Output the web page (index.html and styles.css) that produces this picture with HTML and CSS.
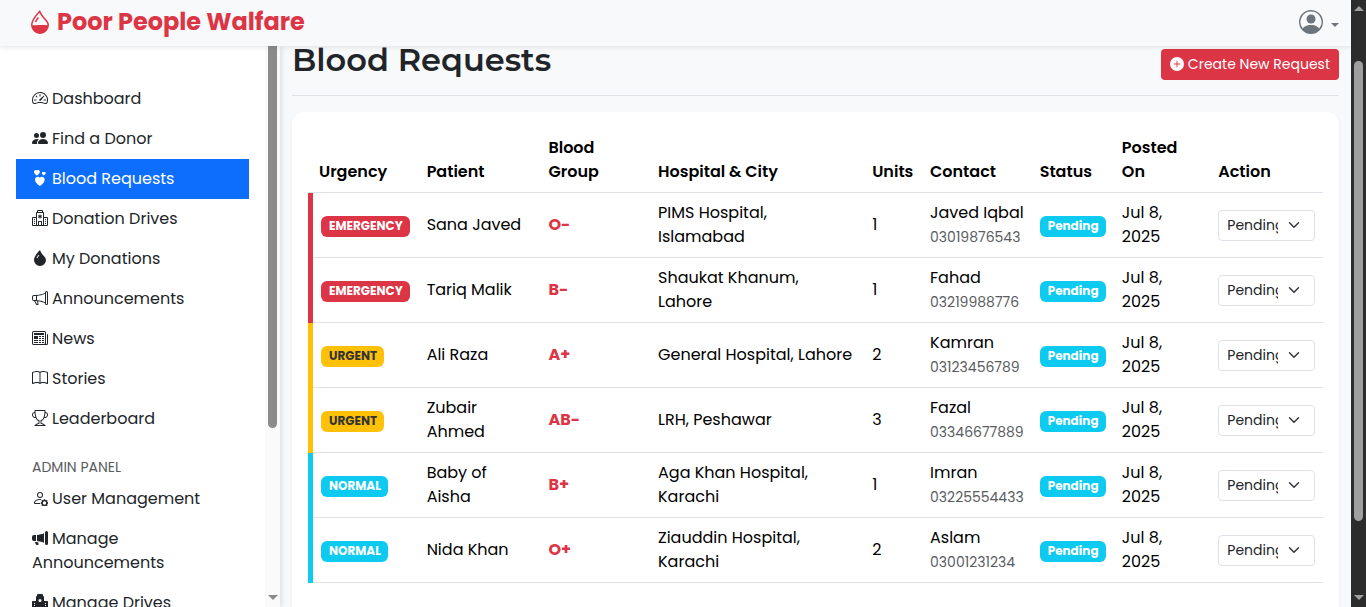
FILE: index.html
```html
<!DOCTYPE html>
<html lang="en">
<head>
<meta charset="utf-8">
<meta name="viewport" content="width=device-width, initial-scale=1">
<title>Blood Requests - Poor People Walfare</title>
<link rel="stylesheet" href="styles.css">
</head>
<body>
<svg class="sprite" aria-hidden="true">
  <symbol id="droplet-half" viewBox="0 0 16 16"><path fill-rule="evenodd" d="M7.210.800C7.690.295 8 0 8 0q.164.544.371 1.038c.812 1.946 2.073 3.350 3.197 4.600C12.878 7.096 14 8.345 14 10a6 6 0 0 1-12 0C2 6.668 5.580 2.517 7.210.800m.413 1.021A31 31 0 0 0 5.794 3.990c-.726.950-1.436 2.008-1.960 3.070C3.304 8.133 3 9.138 3 10c0 .300 2.500.200 5 0s5 .300 5 0c0-1.201-.796-2.157-2.181-3.700C9.750 5.110 8.500 3.720 7.623 1.820z"/><path fill-rule="evenodd" d="M4.553 7.776c.820-1.641 1.717-2.753 2.093-3.130l.708.708c-.290.290-1.128 1.311-1.907 2.870z"/></symbol>
  <symbol id="person-circle" viewBox="0 0 16 16"><path d="M11 6a3 3 0 1 1-6 0 3 3 0 0 1 6 0"/><path fill-rule="evenodd" d="M0 8a8 8 0 1 1 16 0A8 8 0 0 1 0 8m8-7a7 7 0 0 0-5.468 11.370C3.242 11.226 4.805 10 8 10s4.757 1.225 5.468 2.370A7 7 0 0 0 8 1"/></symbol>
  <symbol id="speedometer" viewBox="0 0 16 16"><path d="M8 4a.5.5 0 0 1 .5.5V6a.5.5 0 0 1-1 0V4.500A.5.5 0 0 1 8 4M3.732 5.732a.5.5 0 0 1 .707 0l.915.914a.5.5 0 1 1-.708.708l-.914-.915a.5.5 0 0 1 0-.707M2 10a.5.5 0 0 1 .5-.5h1.586a.5.5 0 0 1 0 1H2.500A.5.5 0 0 1 2 10m9.500 0a.5.5 0 0 1 .5-.5h1.500a.5.5 0 0 1 0 1H12a.5.5 0 0 1-.5-.5m.754-4.246a.389.389 0 0 0-.527-.020L7.547 9.310a.910.910 0 1 0 1.302 1.258l3.434-4.297a.389.389 0 0 0-.029-.518z"/><path fill-rule="evenodd" d="M0 10a8 8 0 1 1 15.547 2.661c-.442 1.253-1.845 1.602-2.932 1.250C11.309 13.488 9.475 13 8 13c-1.474 0-3.310.488-4.615.911-1.087.352-2.490.003-2.932-1.250A8 8 0 0 1 0 10m8-7a7 7 0 0 0-6.603 9.329c.203.575.923.876 1.680.630C4.397 12.533 6.358 12 8 12s3.604.532 4.923.960c.757.245 1.477-.056 1.680-.631A7 7 0 0 0 8 3"/></symbol>
  <symbol id="people-fill" viewBox="0 0 16 16"><path d="M7 14s-1 0-1-1 1-4 5-4 5 3 5 4-1 1-1 1zm4-6a3 3 0 1 0 0-6 3 3 0 0 0 0 6m-5.784 6A2.240 2.240 0 0 1 5 13c0-1.355.680-2.750 1.936-3.720A6.300 6.300 0 0 0 5 9c-4 0-5 3-5 4s1 1 1 1zM4.500 8a2.500 2.500 0 1 0 0-5 2.500 2.500 0 0 0 0 5"/></symbol>
  <symbol id="hearts" viewBox="0 0 16 16"><path fill-rule="evenodd" d="M4.931.481c1.627-1.671 5.692 1.254 0 5.015-5.692-3.760-1.626-6.686 0-5.015m6.840 1.794c1.084-1.114 3.795.836 0 3.343-3.795-2.507-1.084-4.457 0-3.343M7.840 7.642c2.710-2.786 9.486 2.090 0 8.358-9.487-6.268-2.710-11.144 0-8.358"/></symbol>
  <symbol id="hospital" viewBox="0 0 16 16"><path fill-rule="evenodd" d="M5 1a1 1 0 0 1 1-1h4a1 1 0 0 1 1 1v1a1 1 0 0 1 1 1v4h3a1 1 0 0 1 1 1v7a1 1 0 0 1-1 1H1a1 1 0 0 1-1-1V8a1 1 0 0 1 1-1h3V3a1 1 0 0 1 1-1zm1 1h4V1H6zM5 3v12h1v-3.500a.5.5 0 0 1 .5-.5h3a.5.5 0 0 1 .5.5V15h1V3zm2 9v3h2v-3zM1 8v7h3V8zm11 0v7h3V8z"/><path d="M7.500 4.500h1v1.134l.982-.567.500.866L9 6.500l.982.567-.500.866-.982-.567V8.500h-1V7.366l-.982.567-.500-.866L7 6.500l-.982-.567.500-.866.982.567zM2 9h1v1H2zm0 2h1v1H2zm0 2h1v1H2zm11-4h1v1h-1zm0 2h1v1h-1zm0 2h1v1h-1z"/></symbol>
  <symbol id="hospital-fill" viewBox="0 0 16 16"><path fill-rule="evenodd" d="M6 0a1 1 0 0 0-1 1v1a1 1 0 0 0-1 1v4H1a1 1 0 0 0-1 1v7a1 1 0 0 0 1 1h6v-2.500a.5.5 0 0 1 1 0V16h7a1 1 0 0 0 1-1V8a1 1 0 0 0-1-1h-3V3a1 1 0 0 0-1-1V1a1 1 0 0 0-1-1zm2 5a1.500 1.500 0 1 0 0 3 1.500 1.500 0 0 0 0-3M2 9h1v1H2zm0 2h1v1H2zm11-2h1v1h-1zm0 2h1v1h-1z"/></symbol>
  <symbol id="droplet-fill" viewBox="0 0 16 16"><path fill-rule="evenodd" d="M8 16a6 6 0 0 0 6-6c0-1.655-1.122-2.904-2.432-4.362C10.254 4.176 8.750 2.503 8 0c0 0-6 5.686-6 10a6 6 0 0 0 6 6M6.646 4.646l.708.708c-.290.290-1.128 1.311-1.907 2.870l-.894-.448c.820-1.641 1.717-2.753 2.093-3.130"/></symbol>
  <symbol id="megaphone" viewBox="0 0 16 16"><path d="M13 2.500a1.500 1.500 0 0 1 3 0v11a1.500 1.500 0 0 1-3 0v-.214c-2.162-1.241-4.490-1.843-6.912-2.083l.405 2.712A1 1 0 0 1 5.510 15.100h-.548a1 1 0 0 1-.916-.599l-1.850-3.490-.202-.003A2.014 2.014 0 0 1 0 9V7a2.020 2.020 0 0 1 1.992-2.013 75 75 0 0 0 2.483-.075c3.043-.154 6.148-.849 8.525-2.199zm1 0v11a.5.5 0 0 0 1 0v-11a.5.5 0 0 0-1 0m-1 1.350c-2.344 1.205-5.209 1.842-8 2.033v4.233q.270.015.537.036c2.568.189 5.093.744 7.463 1.993zm-9 6.215v-4.130a95 95 0 0 1-1.992.052A1.020 1.020 0 0 0 1 7v2c0 .550.448 1.002 1.006 1.009A61 61 0 0 1 4 10.065m-.657.975 1.609 3.037.010.024h.548l-.002-.014-.443-2.966a68 68 0 0 0-1.722-.082z"/></symbol>
  <symbol id="megaphone-fill" viewBox="0 0 16 16"><path d="M13 2.500a1.500 1.500 0 0 1 3 0v11a1.500 1.500 0 0 1-3 0zm-1 .724c-2.067.950-4.539 1.481-7 1.656v6.237a25 25 0 0 1 1.088.085c2.053.204 4.038.668 5.912 1.560zm-8 7.841V4.934c-.680.027-1.399.043-2.008.053A2.020 2.020 0 0 0 0 7v2c0 1.106.896 1.996 1.994 2.009l.496.008a64 64 0 0 1 1.510.048m1.390 1.081q.428.032.850.078l.253 1.690a1 1 0 0 1-.983 1.187h-.548a1 1 0 0 1-.916-.599l-1.314-2.480a66 66 0 0 1 1.692.064q.491.026.966.060"/></symbol>
  <symbol id="newspaper" viewBox="0 0 16 16"><path d="M0 2.500A1.500 1.500 0 0 1 1.500 1h11A1.500 1.500 0 0 1 14 2.500v10.528c0 .300-.050.654-.238.972h.738a.5.5 0 0 0 .5-.5v-9a.5.5 0 0 1 1 0v9a1.500 1.500 0 0 1-1.500 1.500H1.497A1.497 1.497 0 0 1 0 13.500zM12 14c.370 0 .654-.211.853-.441.092-.106.147-.279.147-.531V2.500a.5.5 0 0 0-.5-.5h-11a.5.5 0 0 0-.5.5v11c0 .278.223.500.497.500z"/><path d="M2 3h10v2H2zm0 3h4v3H2zm0 4h4v1H2zm0 2h4v1H2zm5-6h2v1H7zm3 0h2v1h-2zM7 8h2v1H7zm3 0h2v1h-2zm-3 2h2v1H7zm3 0h2v1h-2zm-3 2h2v1H7zm3 0h2v1h-2z"/></symbol>
  <symbol id="book" viewBox="0 0 16 16"><path d="M1 2.828c.885-.370 2.154-.769 3.388-.893 1.330-.134 2.458.063 3.112.752v9.746c-.935-.530-2.120-.603-3.213-.493-1.180.120-2.370.461-3.287.811zm7.500-.141c.654-.689 1.782-.886 3.112-.752 1.234.124 2.503.523 3.388.893v9.923c-.918-.350-2.107-.692-3.287-.810-1.094-.111-2.278-.039-3.213.492zM8 1.783C7.015.936 5.587.810 4.287.940c-1.514.153-3.042.672-3.994 1.105A.5.5 0 0 0 0 2.500v11a.5.5 0 0 0 .707.455c.882-.400 2.303-.881 3.680-1.020 1.409-.142 2.590.087 3.223.877a.5.5 0 0 0 .780 0c.633-.790 1.814-1.019 3.222-.877 1.378.139 2.800.620 3.681 1.020A.5.5 0 0 0 16 13.500v-11a.5.5 0 0 0-.293-.455c-.952-.433-2.480-.952-3.994-1.105C10.413.809 8.985.936 8 1.783"/></symbol>
  <symbol id="trophy" viewBox="0 0 16 16"><path d="M2.500.5A.5.5 0 0 1 3 0h10a.5.5 0 0 1 .5.5q0 .807-.034 1.536a3 3 0 1 1-1.133 5.890c-.790 1.865-1.878 2.777-2.833 3.011v2.173l1.425.356c.194.048.377.135.537.255L13.300 15.100a.5.5 0 0 1-.3.900H3a.5.5 0 0 1-.3-.900l1.838-1.379c.160-.120.343-.207.537-.255L6.500 13.110v-2.173c-.955-.234-2.043-1.146-2.833-3.012a3 3 0 1 1-1.132-5.890A33 33 0 0 1 2.500.5m.099 2.540a2 2 0 0 0 .720 3.935c-.333-1.050-.588-2.346-.720-3.935m10.083 3.935a2 2 0 0 0 .720-3.935c-.133 1.590-.388 2.885-.720 3.935M3.504 1q.010.775.056 1.469c.130 2.028.457 3.546.870 4.667C5.294 9.480 6.484 10 7 10a.5.5 0 0 1 .5.5v2.610a1 1 0 0 1-.757.970l-1.426.356a.5.5 0 0 0-.179.085L4.500 15h7l-.638-.479a.5.5 0 0 0-.180-.085l-1.425-.356a1 1 0 0 1-.757-.970V10.500A.5.5 0 0 1 9 10c.516 0 1.706-.520 2.570-2.864.413-1.120.740-2.640.870-4.667q.045-.694.056-1.469z"/></symbol>
  <symbol id="person-gear" viewBox="0 0 16 16"><path fill-rule="evenodd" d="M11 5a3 3 0 1 1-6 0 3 3 0 0 1 6 0M8 7a2 2 0 1 0 0-4 2 2 0 0 0 0 4m.256 7a4.500 4.500 0 0 1-.229-1.004H3c.001-.246.154-.986.832-1.664C4.484 10.680 5.711 10 8 10q.390 0 .740.025c.226-.341.496-.650.804-.918Q8.844 9.002 8 9c-5 0-6 3-6 4s1 1 1 1z"/><path d="M11.900 9.200h1.200l.300.900.500.200.850-.400.850.850-.400.850.200.500.900.300v1.200l-.900.300-.200.500.400.850-.850.850-.850-.400-.500.200-.300.900h-1.200l-.300-.900-.500-.200-.850.400-.850-.850.400-.850-.200-.500-.900-.300v-1.200l.900-.300.200-.500-.400-.850.850-.850.850.400.500-.200zM12.500 11.300a1.700 1.700 0 1 0 0 3.400 1.700 1.700 0 0 0 0-3.400" fill-rule="evenodd"/></symbol>
  <symbol id="plus-circle-fill" viewBox="0 0 16 16"><path fill-rule="evenodd" d="M16 8A8 8 0 1 1 0 8a8 8 0 0 1 16 0M8.500 4.500a.5.5 0 0 0-1 0v3h-3a.5.5 0 0 0 0 1h3v3a.5.5 0 0 0 1 0v-3h3a.5.5 0 0 0 0-1h-3z"/></symbol>
</svg>

<div class="window">
  <div class="page">
    <header class="topbar">
      <a class="brand" href="#"><svg class="brand-icon"><use href="#droplet-half"/></svg>Poor People Walfare</a>
      <button class="account" type="button" aria-label="Account menu"><svg class="avatar"><use href="#person-circle"/></svg><span class="caret"></span></button>
    </header>
    <div class="body">
      <aside class="sidebar">
        <nav class="nav">
          <a class="nav-link" href="#"><svg class="icon"><use href="#speedometer"/></svg>Dashboard</a>
          <a class="nav-link" href="#"><svg class="icon"><use href="#people-fill"/></svg>Find a Donor</a>
          <a class="nav-link active" href="#" aria-current="page"><svg class="icon"><use href="#hearts"/></svg>Blood Requests</a>
          <a class="nav-link" href="#"><svg class="icon"><use href="#hospital"/></svg>Donation Drives</a>
          <a class="nav-link" href="#"><svg class="icon"><use href="#droplet-fill"/></svg>My Donations</a>
          <a class="nav-link" href="#"><svg class="icon"><use href="#megaphone"/></svg>Announcements</a>
          <a class="nav-link" href="#"><svg class="icon"><use href="#newspaper"/></svg>News</a>
          <a class="nav-link" href="#"><svg class="icon"><use href="#book"/></svg>Stories</a>
          <a class="nav-link" href="#"><svg class="icon"><use href="#trophy"/></svg>Leaderboard</a>
          <h2 class="nav-heading">ADMIN PANEL</h2>
          <a class="nav-link" href="#"><svg class="icon"><use href="#person-gear"/></svg>User Management</a>
          <a class="nav-link" href="#"><svg class="icon"><use href="#megaphone-fill"/></svg>Manage<br>Announcements</a>
          <a class="nav-link" href="#"><svg class="icon"><use href="#hospital-fill"/></svg>Manage Drives</a>
        </nav>
        <div class="side-scroll" aria-hidden="true"><span class="side-thumb"></span><span class="arrow down"></span></div>
      </aside>
      <main class="content">
        <div class="title-row">
          <h1 class="title">Blood Requests</h1>
          <button class="create" type="button"><svg class="create-icon"><use href="#plus-circle-fill"/></svg>Create New Request</button>
        </div>
        <section class="card">
          <table class="requests">
            <colgroup>
              <col class="c-urgency"><col class="c-patient"><col class="c-group"><col class="c-hospital"><col class="c-units"><col class="c-contact"><col class="c-status"><col class="c-posted"><col class="c-action">
            </colgroup>
            <thead>
              <tr><th>Urgency</th><th>Patient</th><th>Blood<br>Group</th><th>Hospital &amp; City</th><th>Units</th><th>Contact</th><th>Status</th><th>Posted<br>On</th><th>Action</th></tr>
            </thead>
            <tbody>
              <tr class="emergency"><td><span class="badge">EMERGENCY</span></td><td>Sana Javed</td><td class="group">O-</td><td>PIMS Hospital,<br>Islamabad</td><td>1</td><td>Javed Iqbal<br><small>03019876543</small></td><td><span class="badge pending">Pending</span></td><td>Jul 8,<br>2025</td><td><select aria-label="Status for Sana Javed"><option>Pending</option></select></td></tr>
              <tr class="emergency"><td><span class="badge">EMERGENCY</span></td><td>Tariq Malik</td><td class="group">B-</td><td>Shaukat Khanum,<br>Lahore</td><td>1</td><td>Fahad<br><small>03219988776</small></td><td><span class="badge pending">Pending</span></td><td>Jul 8,<br>2025</td><td><select aria-label="Status for Tariq Malik"><option>Pending</option></select></td></tr>
              <tr class="urgent"><td><span class="badge">URGENT</span></td><td>Ali Raza</td><td class="group">A+</td><td>General Hospital, Lahore</td><td>2</td><td>Kamran<br><small>03123456789</small></td><td><span class="badge pending">Pending</span></td><td>Jul 8,<br>2025</td><td><select aria-label="Status for Ali Raza"><option>Pending</option></select></td></tr>
              <tr class="urgent"><td><span class="badge">URGENT</span></td><td>Zubair<br>Ahmed</td><td class="group">AB-</td><td>LRH, Peshawar</td><td>3</td><td>Fazal<br><small>03346677889</small></td><td><span class="badge pending">Pending</span></td><td>Jul 8,<br>2025</td><td><select aria-label="Status for Zubair Ahmed"><option>Pending</option></select></td></tr>
              <tr class="normal"><td><span class="badge">NORMAL</span></td><td>Baby of<br>Aisha</td><td class="group">B+</td><td>Aga Khan Hospital,<br>Karachi</td><td>1</td><td>Imran<br><small>03225554433</small></td><td><span class="badge pending">Pending</span></td><td>Jul 8,<br>2025</td><td><select aria-label="Status for Baby of Aisha"><option>Pending</option></select></td></tr>
              <tr class="normal"><td><span class="badge">NORMAL</span></td><td>Nida Khan</td><td class="group">O+</td><td>Ziauddin Hospital,<br>Karachi</td><td>2</td><td>Aslam<br><small>03001231234</small></td><td><span class="badge pending">Pending</span></td><td>Jul 8,<br>2025</td><td><select aria-label="Status for Nida Khan"><option>Pending</option></select></td></tr>
            </tbody>
          </table>
        </section>
      </main>
    </div>
  </div>
  <div class="page-scroll" aria-hidden="true"><span class="arrow up"></span><span class="page-thumb"></span><span class="arrow down"></span></div>
</div>
</body>
</html>
```
FILE: styles.css
```css
* { box-sizing: border-box; }

body {
  margin: 0;
  background: #f8f9fa;
  color: #212529;
  font-family: Poppins, Inter, "Liberation Sans", sans-serif;
  font-size: 16px;
  line-height: 24px;
}

svg { fill: currentColor; }
.sprite { display: none; }

.window { display: flex; height: 100vh; overflow: hidden; }
.page { flex: 1; min-width: 0; display: flex; flex-direction: column; }

.topbar {
  z-index: 1;
  flex: none;
  display: flex;
  align-items: center;
  justify-content: space-between;
  height: 46px;
  padding: 0 12px 2px 28px;
  background: #f8f9fa;
  box-shadow: 0 2px 4px rgba(0, 0, 0, .08);
}
.brand {
  display: flex;
  align-items: center;
  gap: 5px;
  color: #dc3545;
  font-size: 24px;
  font-weight: 700;
  line-height: 26px;
  text-decoration: none;
}
.brand-icon { width: 24px; height: 24px; }
.account {
  display: flex;
  align-items: center;
  gap: 8px;
  padding: 0;
  border: 0;
  background: none;
  color: #6c757d;
}
.avatar { width: 24px; height: 24px; }
.caret { margin-top: 6px; border: 4px solid transparent; border-top-color: currentColor; border-bottom: 0; }

.body { flex: 1; min-height: 0; display: flex; }

.sidebar {
  flex: none;
  display: flex;
  width: 280px;
  background: #fff;
  box-shadow: 2px 0 5px rgba(0, 0, 0, .1);
}
.nav { flex: 1; min-width: 0; padding: 33px 16px 0; }
.nav-link {
  display: block;
  padding: 8px 16px;
  color: #212529;
  text-decoration: none;
}
.nav-link.active { background: #0d6efd; color: #fff; }
.icon { width: 16px; height: 16px; margin-right: 4px; vertical-align: -2px; }
.nav-heading {
  margin: 18px 16px 2px;
  color: #595c5f;
  font-size: 14px;
  font-weight: 400;
  line-height: 20px;
}

.side-scroll {
  display: flex;
  flex-direction: column;
  align-items: center;
  justify-content: space-between;
  width: 15px;
  padding-bottom: 7px;
  background: #fafafa;
}
.side-thumb { width: 9px; height: 69%; border-radius: 0 0 5px 5px; background: #8b8b8b; }
.arrow { border: 5px solid transparent; }
.arrow.down { border-top-color: #8b8b8b; border-bottom: 0; }
.arrow.up { border-bottom-color: #9f9f9f; border-top: 0; }

.page-scroll {
  flex: none;
  display: grid;
  grid-template-rows: 61fr 460fr 86fr;
  justify-items: center;
  width: 15px;
  background: #2c2c2c;
}
.page-scroll .up { align-self: start; margin-top: 6px; }
.page-scroll .down { align-self: end; margin-bottom: 7px; border-top-color: #9f9f9f; }
.page-thumb { width: 9px; border-radius: 5px; background: #9f9f9f; }

.content { flex: 1; min-width: 0; display: flex; flex-direction: column; padding: 0 12px; }
.title-row {
  flex: none;
  display: flex;
  align-items: center;
  justify-content: space-between;
  height: 50px;
  margin-bottom: 16px;
  padding-bottom: 12px;
  border-bottom: 1px solid #dee2e6;
}
.title {
  margin: 0;
  padding-bottom: 10px;
  font-family: Montserrat, Inter, sans-serif;
  font-size: 32px;
  font-weight: 600;
  line-height: 36px;
}
.create {
  display: flex;
  align-items: center;
  gap: 4px;
  height: 31px;
  padding: 0 9px 2px;
  border: 0;
  border-radius: 4px;
  background: #dc3545;
  color: #fff;
  font: inherit;
  font-size: 14px;
  white-space: nowrap;
}
.create-icon { width: 14px; height: 14px; }

.card {
  flex: 1 0 auto;
  padding: 16px 16px 40px;
  border-radius: 12px;
  background: #fff;
  box-shadow: 0 2px 4px rgba(0, 0, 0, .06);
}

.requests { width: 100%; table-layout: fixed; border-spacing: 0; color: #000; white-space: nowrap; }
.c-urgency { width: 10.9%; }
.c-patient { width: 12%; }
.c-group { width: 10.8%; }
.c-hospital { width: 21.1%; }
.c-units { width: 5.7%; }
.c-contact { width: 10.8%; }
.c-status { width: 8.1%; }
.c-posted { width: 9.5%; }
.c-action { width: 11.1%; }

th, td { padding: 8px; border-bottom: 1px solid #dee2e6; text-align: left; }
th { font-weight: 600; vertical-align: bottom; }
th:first-child { padding-left: 11px; }
td { vertical-align: middle; }
td:first-child {
  padding: 8px 8px 9px 13px;
  border-bottom: 0;
  box-shadow: inset 5px 0 var(--level), inset 0 -1px #dee2e6;
}
.emergency { --level: #dc3545; }
.urgent { --level: #ffc107; }
.normal { --level: #0dcaf0; }
.group { color: #dc3545; font-weight: 700; }
small { color: #595c5f; font-size: 14px; }

.badge {
  display: inline-block;
  padding: 4px 7px 5px 8px;
  border-radius: 6px;
  background: var(--level);
  color: #fff;
  font-size: 12px;
  font-weight: 700;
  line-height: 12px;
}
.urgent .badge { color: #333; }
tr .badge.pending { background: #0dcaf0; color: #fff; }

select {
  display: block;
  width: 100%;
  height: 31px;
  padding: 0 36px 0 8px;
  border: 1px solid #dee2e6;
  border-radius: 4px;
  appearance: none;
  background: #fff url("data:image/svg+xml,%3Csvg xmlns='http://www.w3.org/2000/svg' viewBox='0 0 16 16'%3E%3Cpath fill='none' stroke='%23343a40' stroke-linecap='round' stroke-linejoin='round' stroke-width='2' d='m2 5 6 6 6-6'/%3E%3C/svg%3E") no-repeat right 14px center / 12px 12px;
  color: #212529;
  font: inherit;
  font-size: 14px;
}
```
